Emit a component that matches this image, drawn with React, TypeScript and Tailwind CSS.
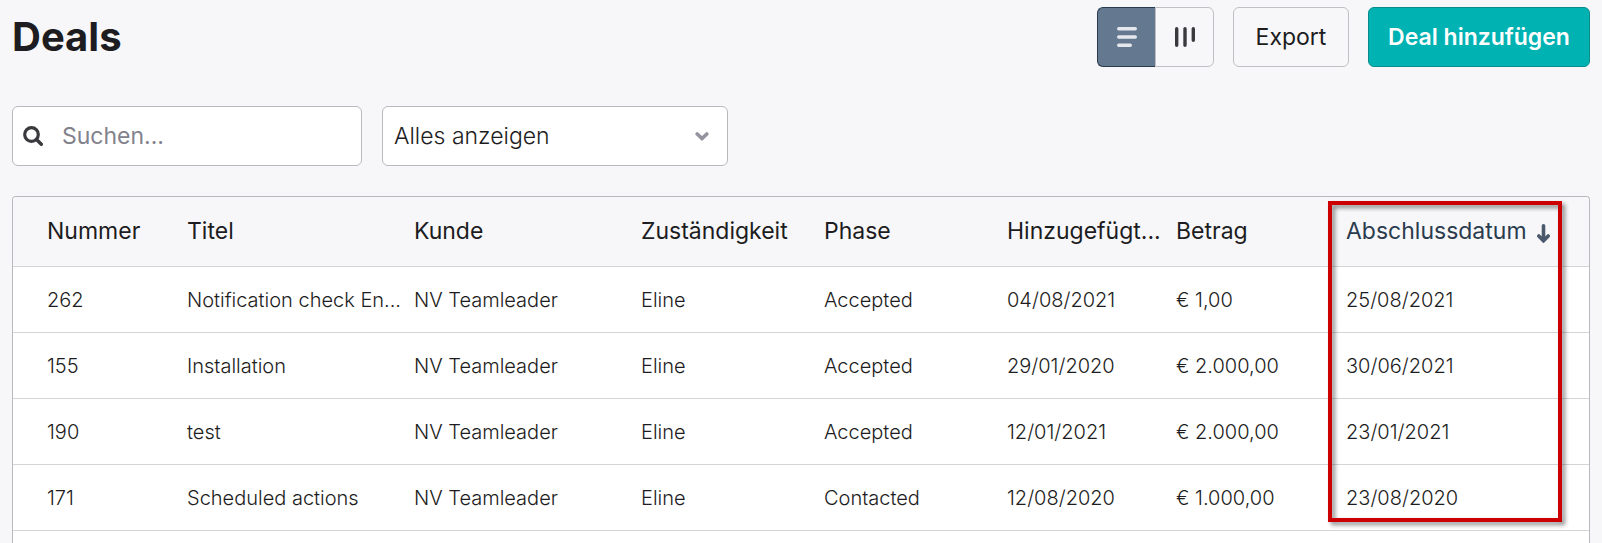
const deals = [
  { nr: '262', title: 'Notification check En...', phase: 'Accepted', added: '04/08/2021', amount: '€ 1,00', closing: '25/08/2021' },
  { nr: '155', title: 'Installation', phase: 'Accepted', added: '29/01/2020', amount: '€ 2.000,00', closing: '30/06/2021' },
  { nr: '190', title: 'test', phase: 'Accepted', added: '12/01/2021', amount: '€ 2.000,00', closing: '23/01/2021' },
  { nr: '171', title: 'Scheduled actions', phase: 'Contacted', added: '12/08/2020', amount: '€ 1.000,00', closing: '23/08/2020' },
];

function Header() {
  return (
    <header className="flex items-center justify-between">
      <h1 className="text-[40px] leading-[60px] font-bold">Deals</h1>
      <div className="flex h-[60px] gap-[19px]">
        <div className="flex">
          <button
            type="button"
            aria-label="Liste"
            className="flex w-[58px] items-center justify-center rounded-l-md border border-r-0 border-[#2a3b4d] bg-[#64788f]"
          >
            <svg width="20" height="20" viewBox="0 0 20 20" fill="none" stroke="#e4e8ec" strokeWidth="3.4" strokeLinecap="round">
              <path d="M1.7 1.7h16.6M1.7 10h16.6M1.7 18.3h11.6" />
            </svg>
          </button>
          <button
            type="button"
            aria-label="Pipeline"
            className="flex w-[59px] items-center justify-center rounded-r-md border border-[#c0c0c4]"
          >
            <svg width="20" height="20" viewBox="0 0 20 20" fill="none" stroke="#3a3a3e" strokeWidth="3.4" strokeLinecap="round">
              <path d="M1.7 1.7v16.6M10 1.7v16.6M18.3 1.7v11.6" />
            </svg>
          </button>
        </div>
        <button type="button" className="min-w-[116px] rounded-md border border-[#c0c0c4] px-[19px] text-[23px]">
          Export
        </button>
        <button type="button" className="min-w-[222px] rounded-md border border-[#0a8c8c] bg-[#00b2b2] px-[19px] text-[23px] font-semibold text-white">
          Deal hinzufügen
        </button>
      </div>
    </header>
  );
}

function Filters() {
  return (
    <div className="mt-[39px] flex gap-5">
      <label className="flex h-[60px] w-[350px] items-center gap-[19px] rounded-md border border-[#b9b9bd] bg-white px-[10px]">
        <svg className="shrink-0" width="20" height="20" viewBox="0 0 20 20" fill="none" stroke="#3a3a3e" strokeLinecap="round">
          <circle cx="8.5" cy="8.5" r="6.8" strokeWidth="3.2" />
          <path d="M13.5 13.5l4.8 4.8" strokeWidth="3.4" />
        </svg>
        <input
          type="text"
          aria-label="Suchen"
          placeholder="Suchen..."
          className="w-full min-w-0 text-[23px] outline-none placeholder:text-[#82828c]"
        />
      </label>
      <div className="relative w-[346px]">
        <select aria-label="Filter" className="h-[60px] w-full appearance-none rounded-md border border-[#b9b9bd] bg-white px-[11px] text-[23px] font-light">
          <option>Alles anzeigen</option>
        </select>
        <svg
          className="pointer-events-none absolute top-[26px] right-[19px]"
          width="14"
          height="10"
          viewBox="0 0 14 10"
          fill="none"
          stroke="#94949e"
          strokeWidth="3.6"
          strokeLinecap="round"
        >
          <path d="M2.2 2L7 6.6L11.8 2" />
        </svg>
      </div>
    </div>
  );
}

export default function App() {
  const th = 'pr-2 text-left text-[23px] font-normal whitespace-nowrap';
  const td = 'pr-2 whitespace-nowrap';
  return (
    <main className="flex min-h-screen flex-col bg-[#f7f7f9] px-3 pt-[7px] font-['Inter',sans-serif] text-[#1c1c21]">
      <Header />
      <Filters />
      <section className="relative mt-[30px] grow rounded-t border border-b-0 border-[#b9b9bd] bg-white">
        <table className="w-full table-fixed border-separate border-spacing-0">
          <colgroup>
            <col className="w-[174px]" />
            <col />
            <col />
            <col className="w-[183px]" />
            <col className="w-[183px]" />
            <col className="w-[169px]" />
            <col className="w-[170px]" />
            <col className="w-[243px]" />
          </colgroup>
          <thead>
            <tr className="h-[70px] bg-[#f7f7f9] *:border-b *:border-[#d5d5d8]">
              <th className={`${th} rounded-tl pl-[34px]`}>Nummer</th>
              <th className={th}>Titel</th>
              <th className={th}>Kunde</th>
              <th className={th}>Zuständigkeit</th>
              <th className={th}>Phase</th>
              <th className={th}>Hinzugefügt...</th>
              <th className={th}>Betrag</th>
              <th className="rounded-tr text-left text-[23px] font-normal text-[#2a3b4d]">
                <span className="flex items-center gap-[10px]">
                  Abschlussdatum
                  <svg className="mt-1" width="13" height="19" viewBox="0 0 13 19" fill="none" stroke="#4a5a6c" strokeWidth="3.6" strokeLinecap="round">
                    <path d="M6.5 1.8v14.4M1.8 12L6.5 16.8L11.2 12" />
                  </svg>
                </span>
              </th>
            </tr>
          </thead>
          <tbody>
            {deals.map((deal) => (
              <tr key={deal.nr} className="h-[66px] text-xl font-light *:border-b *:border-[#d5d5d8]">
                <td className={`${td} pl-[34px]`}>{deal.nr}</td>
                <td className={td}>{deal.title}</td>
                <td className={td}>NV Teamleader</td>
                <td className={td}>Eline</td>
                <td className={td}>{deal.phase}</td>
                <td className={td}>{deal.added}</td>
                <td className={td}>{deal.amount}</td>
                <td className={td}>{deal.closing}</td>
              </tr>
            ))}
          </tbody>
        </table>
        <div className="pointer-events-none absolute top-1 right-[27px] h-[321px] w-[234px] border-4 border-[#cc0000] drop-shadow-[3px_3px_2px_rgba(0,0,0,0.45)]" />
      </section>
    </main>
  );
}
